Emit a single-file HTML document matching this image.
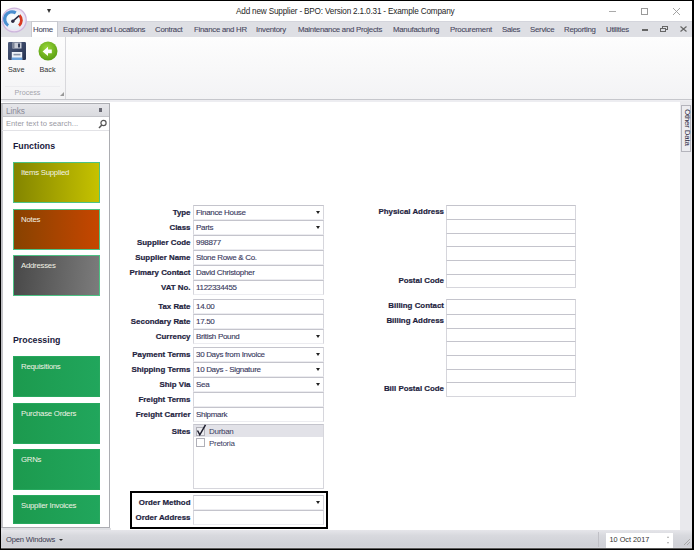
<!DOCTYPE html>
<html><head><meta charset="utf-8">
<style>
*{box-sizing:border-box;margin:0;padding:0}
html,body{width:694px;height:550px;overflow:hidden;background:#000}
body{position:relative;font-family:"Liberation Sans",sans-serif;}
.a{position:absolute}
.t{position:absolute;white-space:nowrap;line-height:1}
.tab{top:26px;font-size:7.8px;letter-spacing:-0.25px;color:#48485e;-webkit-text-stroke:0.1px #48485e}
.tile{position:absolute;left:13px;width:87px;border:1px solid #4cc284}
.tt{font-size:7.8px;letter-spacing:-0.25px;color:#f2f2e6;left:7px;top:6px;position:absolute;white-space:nowrap;line-height:1}
.hd{font-size:8.8px;font-weight:bold;color:#1a1a3c}
.lb{font-size:7.9px;font-weight:bold;color:#1e1e3e;-webkit-text-stroke:0.2px #1e1e3e}
.in{position:absolute;left:193px;width:131px;height:15px;border:1px solid #d6d6dc;border-top-color:#c4c4cc;border-bottom-color:#ececf0;background:#fff}
.iv{font-size:8px;letter-spacing:-0.32px;color:#3a3a60;-webkit-text-stroke:0.12px #3a3a60;left:2px;top:3px;position:absolute;white-space:nowrap;line-height:1}
.dd{position:absolute;left:122px;top:5px;width:0;height:0;border-left:2.5px solid transparent;border-right:2.5px solid transparent;border-top:3px solid #222}
.ra{position:absolute;left:446px;width:130px;border:1px solid #d6d6dc;border-top-color:#c4c4cc;background:#fff}
</style></head><body>
<div class="a" style="left:1px;top:1px;width:691px;height:547px;background:#fff"></div>
<div class="t" style="left:236px;top:7.5px;font-size:8.2px;letter-spacing:-0.18px;color:#262626">Add new Supplier - BPO: Version 2.1.0.31 - Example Company</div>
<div class="a" style="left:47px;top:9px;width:0;height:0;border-left:2.5px solid transparent;border-right:2.5px solid transparent;border-top:4px solid #333"></div>
<div class="a" style="left:609px;top:10.5px;width:7px;height:1px;background:#aaa"></div>
<div class="a" style="left:641px;top:8px;width:7px;height:7px;border:1px solid #9a9a9a"></div>
<svg class="a" style="left:672px;top:7px" width="9" height="9" viewBox="0 0 9 9"><path d="M1 1L8 8M8 1L1 8" stroke="#9a9a9a" stroke-width="0.9"/></svg>
<div class="a" style="left:1px;top:21px;width:691px;height:16px;background:#dedfe4;border-top:1px solid #d4d5dc"></div>
<div class="a" style="left:31px;top:21px;width:27px;height:17px;background:#fff;border:1px solid #c9cad0;border-bottom:none"></div>
<div class="t tab" style="left:33px">Home</div>
<div class="t tab" style="left:63px">Equipment and Locations</div>
<div class="t tab" style="left:155px">Contract</div>
<div class="t tab" style="left:194px">Finance and HR</div>
<div class="t tab" style="left:256px">Inventory</div>
<div class="t tab" style="left:298px">Maintenance and Projects</div>
<div class="t tab" style="left:393px">Manufacturing</div>
<div class="t tab" style="left:450px">Procurement</div>
<div class="t tab" style="left:502px">Sales</div>
<div class="t tab" style="left:530px">Service</div>
<div class="t tab" style="left:564px">Reporting</div>
<div class="t tab" style="left:606px">Utilities</div>
<div class="a" style="left:642px;top:29px;width:6px;height:1.5px;background:#666"></div>
<svg class="a" style="left:660px;top:26px" width="8" height="6" viewBox="0 0 8 6"><rect x="2.5" y="0.5" width="5" height="3" fill="none" stroke="#666" stroke-width="1"/><rect x="0.5" y="2.5" width="5" height="3" fill="#dcdde3" stroke="#666" stroke-width="1"/></svg>
<svg class="a" style="left:680px;top:26px" width="7" height="6" viewBox="0 0 7 6"><path d="M0.5 0.5L6.5 5.5M6.5 0.5L0.5 5.5" stroke="#666" stroke-width="1.2"/></svg>
<div class="a" style="left:1px;top:37px;width:691px;height:63px;background:linear-gradient(#fdfdfd,#f3f3f5);border-bottom:1px solid #c6c7cc"></div>
<div class="a" style="left:65px;top:37px;width:1px;height:62px;background:#d8d8dc"></div>
<div class="a" style="left:5px;top:86px;width:55px;height:1px;background:#ececef"></div>
<svg class="a" style="left:8px;top:42px" width="18" height="18" viewBox="0 0 18 18">
<defs><linearGradient id="fg" x1="0" y1="0" x2="1" y2="1"><stop offset="0" stop-color="#4c5a7a"/><stop offset="1" stop-color="#263250"/></linearGradient></defs>
<rect x="0" y="0" width="18" height="18" rx="1.2" fill="url(#fg)"/>
<rect x="4.5" y="0.5" width="9" height="6" fill="#c8ccd6"/>
<rect x="4.5" y="0.5" width="2" height="6" fill="#7c8496"/>
<rect x="10" y="1.5" width="2" height="4" fill="#34405c"/>
<rect x="3.8" y="10" width="10.4" height="8" fill="#eef2f8"/>
<rect x="3.8" y="15.5" width="10.4" height="2.5" fill="#6aa2dc"/>
<rect x="5.5" y="11.8" width="7" height="1.6" fill="#8a94a6"/>
</svg>
<svg class="a" style="left:38px;top:41px" width="20" height="20" viewBox="0 0 20 20">
<defs><radialGradient id="g1" cx="0.45" cy="0.35" r="0.65"><stop offset="0" stop-color="#9ad83a"/><stop offset="1" stop-color="#5a9e12"/></radialGradient></defs>
<circle cx="10" cy="10" r="9.5" fill="url(#g1)"/>
<path d="M4.6 10.4L10 5.8V8.6H13.8V12.2H10V15Z" fill="#fff"/>
</svg>
<div class="t" style="left:8px;top:66px;font-size:7.2px;color:#333">Save</div>
<div class="t" style="left:39.5px;top:66px;font-size:7.2px;color:#333">Back</div>
<div class="t" style="left:14.5px;top:89px;font-size:7.2px;color:#a4a4ac">Process</div>
<svg class="a" style="left:60px;top:92px" width="4" height="4" viewBox="0 0 4 4"><path d="M4 0V4H0Z" fill="#999"/></svg>
<svg class="a" style="left:1px;top:7px" width="27" height="27" viewBox="0 0 27 27">
<defs><radialGradient id="og" cx="0.5" cy="0.4" r="0.6"><stop offset="0" stop-color="#ffffff"/><stop offset="1" stop-color="#e2eef6"/></radialGradient></defs>
<circle cx="13.3" cy="13" r="12.6" fill="#cdb6dc"/>
<circle cx="13.3" cy="13" r="11.3" fill="#efe4f4"/>
<circle cx="13.3" cy="13" r="9.8" fill="url(#og)"/>
<path d="M7.2 18.5A7.2 7.2 0 0 1 14.8 5.9" fill="none" stroke="#4a8ed0" stroke-width="3.2"/>
<path d="M18.4 8.2A7.2 7.2 0 0 1 18 18.6" fill="none" stroke="#d83a22" stroke-width="2.8"/>
<path d="M11.6 14.4L18.2 8.6" stroke="#2c2c44" stroke-width="1.5"/>
<circle cx="11.8" cy="14.2" r="1.7" fill="#2c2c44"/>
</svg>
<div class="a" style="left:1px;top:100px;width:691px;height:2px;background:#ededf1"></div>
<div class="a" style="left:1px;top:103px;width:109px;height:425px;background:#fff;border:1px solid #acadb2;border-left:1px solid #c0c0c4"></div>
<div class="a" style="left:2px;top:104px;width:107px;height:13px;background:linear-gradient(#e6e6ea,#dadbdf);border-bottom:1px solid #c4c5ca"></div>
<div class="a" style="left:2px;top:104px;width:1px;height:423px;background:#c4c4c8"></div>
<div class="t" style="left:6px;top:106.5px;font-size:8.3px;letter-spacing:-0.1px;color:#8c8c9a">Links</div>
<div class="a" style="left:98.5px;top:107.5px;width:3.5px;height:4.5px;background:#6a6a74"></div>
<div class="t" style="left:6px;top:120px;font-size:7.6px;color:#9a9aa4">Enter text to search...</div>
<svg class="a" style="left:98px;top:119px" width="9" height="10" viewBox="0 0 9 10"><circle cx="5.5" cy="4" r="2.6" fill="none" stroke="#555" stroke-width="1.2"/><path d="M3.8 6L1 9" stroke="#555" stroke-width="1.5"/></svg>
<div class="a" style="left:2px;top:130px;width:107px;height:1px;background:#e2e2e6"></div>
<div class="t hd" style="left:13px;top:142px">Functions</div>
<div class="tile" style="top:162px;height:41px;background:linear-gradient(90deg,#838500,#c6c200)"><span class="tt">Items Supplied</span></div>
<div class="tile" style="top:209px;height:41px;background:linear-gradient(90deg,#874200,#c64600)"><span class="tt">Notes</span></div>
<div class="tile" style="top:255px;height:41px;background:linear-gradient(95deg,#484848,#7c7c7c)"><span class="tt">Addresses</span></div>
<div class="t hd" style="left:13px;top:336px">Processing</div>
<div class="tile" style="top:356px;height:41px;border:1px solid #27a85e;background:linear-gradient(90deg,#1c9a4e,#21a65c)"><span class="tt">Requisitions</span></div>
<div class="tile" style="top:403px;height:41px;border:1px solid #27a85e;background:linear-gradient(90deg,#1c9a4e,#21a65c)"><span class="tt">Purchase Orders</span></div>
<div class="tile" style="top:449px;height:41px;border:1px solid #27a85e;background:linear-gradient(90deg,#1c9a4e,#21a65c)"><span class="tt">GRNs</span></div>
<div class="tile" style="top:495px;height:29px;border:1px solid #27a85e;background:linear-gradient(90deg,#1c9a4e,#21a65c)"><span class="tt">Supplier Invoices</span></div>
<div class="t lb" style="right:503.5px;top:209px">Type</div>
<div class="in" style="top:205px"><span class="iv">Finance House</span><i class="dd"></i></div>
<div class="t lb" style="right:503.5px;top:224px">Class</div>
<div class="in" style="top:220px"><span class="iv">Parts</span><i class="dd"></i></div>
<div class="t lb" style="right:503.5px;top:239px">Supplier Code</div>
<div class="in" style="top:235px"><span class="iv">998877</span></div>
<div class="t lb" style="right:503.5px;top:254px">Supplier Name</div>
<div class="in" style="top:250px"><span class="iv">Stone Rowe &amp; Co.</span></div>
<div class="t lb" style="right:503.5px;top:269px">Primary Contact</div>
<div class="in" style="top:265px"><span class="iv">David Christopher</span></div>
<div class="t lb" style="right:503.5px;top:284px">VAT No.</div>
<div class="in" style="top:280px"><span class="iv">1122334455</span></div>
<div class="t lb" style="right:503.5px;top:303px">Tax Rate</div>
<div class="in" style="top:299px"><span class="iv">14.00</span></div>
<div class="t lb" style="right:503.5px;top:318px">Secondary Rate</div>
<div class="in" style="top:314px"><span class="iv">17.50</span></div>
<div class="t lb" style="right:503.5px;top:333px">Currency</div>
<div class="in" style="top:329px"><span class="iv">British Pound</span><i class="dd"></i></div>
<div class="t lb" style="right:503.5px;top:351px">Payment Terms</div>
<div class="in" style="top:347px"><span class="iv">30 Days from Invoice</span><i class="dd"></i></div>
<div class="t lb" style="right:503.5px;top:366px">Shipping Terms</div>
<div class="in" style="top:362px"><span class="iv">10 Days - Signature</span><i class="dd"></i></div>
<div class="t lb" style="right:503.5px;top:381px">Ship Via</div>
<div class="in" style="top:377px"><span class="iv">Sea</span><i class="dd"></i></div>
<div class="t lb" style="right:503.5px;top:396px">Freight Terms</div>
<div class="in" style="top:392px"></div>
<div class="t lb" style="right:503.5px;top:411px">Freight Carrier</div>
<div class="in" style="top:407px"><span class="iv">Shipmark</span></div>
<div class="t lb" style="right:503.5px;top:428px">Sites</div>
<div class="in" style="top:424px;height:65px;border-bottom-color:#d6d6dc"><div class="a" style="left:0;top:0;width:129px;height:12px;background:#e2e2e8"></div><div class="a" style="left:2px;top:2px;width:9px;height:9px;border:1px solid #b0b0b8;background:#ececf0"></div><svg class="a" style="left:2px;top:-1px" width="11" height="13" viewBox="0 0 11 13"><path d="M1.5 6.5L3.8 10.8L9.5 0.8" fill="none" stroke="#1e1e2e" stroke-width="1.5"/></svg><div class="t" style="left:15px;top:2.5px;font-size:8px;letter-spacing:-0.3px;color:#3a3a60">Durban</div><div class="a" style="left:2px;top:13px;width:9px;height:9px;border:1px solid #b0b0b8;background:#fff"></div><div class="t" style="left:15px;top:14.5px;font-size:8px;letter-spacing:-0.3px;color:#3a3a60">Pretoria</div></div>
<div class="a" style="left:130px;top:491px;width:198px;height:38px;border:2px solid #000"></div>
<div class="t lb" style="right:503.5px;top:499px">Order Method</div>
<div class="in" style="top:495px"><i class="dd"></i></div>
<div class="t lb" style="right:503.5px;top:514px">Order Address</div>
<div class="in" style="top:510px"></div>
<div class="ra" style="top:205px;height:15px"></div>
<div class="ra" style="top:219px;height:15px"></div>
<div class="ra" style="top:233px;height:14px"></div>
<div class="ra" style="top:246px;height:15px"></div>
<div class="ra" style="top:260px;height:15px"></div>
<div class="ra" style="top:274px;height:14px"></div>
<div class="ra" style="top:299px;height:16px"></div>
<div class="ra" style="top:314px;height:15px"></div>
<div class="ra" style="top:328px;height:14px"></div>
<div class="ra" style="top:341px;height:15px"></div>
<div class="ra" style="top:355px;height:15px"></div>
<div class="ra" style="top:369px;height:14px"></div>
<div class="ra" style="top:382px;height:15px"></div>
<div class="t lb" style="right:250px;top:208px">Physical Address</div>
<div class="t lb" style="right:250px;top:277px">Postal Code</div>
<div class="t lb" style="right:250px;top:302px">Billing Contact</div>
<div class="t lb" style="right:250px;top:317px">Billing Address</div>
<div class="t lb" style="right:250px;top:385px">Bill Postal Code</div>
<div class="a" style="left:680px;top:101px;width:12px;height:429px;background:#e9e9ed"></div>
<div class="a" style="left:681px;top:105px;width:10px;height:47px;background:#ececf0;border:1px solid #b4b4bc"></div>
<div class="t" style="left:690.5px;top:109px;font-size:7.9px;letter-spacing:-0.2px;color:#2a2a40;transform-origin:0 0;transform:rotate(90deg)">Other Data</div>
<div class="a" style="left:1px;top:528px;width:110px;height:2px;background:#dedfe3"></div>
<div class="a" style="left:1px;top:530px;width:691px;height:18px;background:linear-gradient(#e6e6ea,#d8d9de 30%,#cfd0d6 90%,#dadade)"></div>
<div class="a" style="left:1px;top:548px;width:691px;height:1px;background:#5a5a5a"></div>
<div class="t" style="left:6px;top:536px;font-size:7.6px;letter-spacing:-0.2px;color:#3a3a50">Open Windows</div>
<div class="a" style="left:58.5px;top:538.5px;width:0;height:0;border-left:2px solid transparent;border-right:2px solid transparent;border-top:2.5px solid #333"></div>
<div class="a" style="left:598px;top:532px;width:1px;height:15px;background:#c0c0c6"></div>
<div class="a" style="left:606px;top:533px;width:67px;height:15px;background:#fff"></div>
<div class="t" style="left:609.5px;top:536px;font-size:7.3px;color:#333">10 Oct 2017</div>
<div class="a" style="left:666.5px;top:536px;width:0;height:0;border-left:1.5px solid transparent;border-right:1.5px solid transparent;border-bottom:2px solid #aaa"></div>
<div class="a" style="left:666.5px;top:542px;width:0;height:0;border-left:1.5px solid transparent;border-right:1.5px solid transparent;border-top:2px solid #aaa"></div>
<svg class="a" style="left:681px;top:536px" width="10" height="10" viewBox="0 0 10 10"><path d="M9 3L3 9M9 6L6 9" stroke="#aaa" stroke-width="1"/></svg>
</body></html>
